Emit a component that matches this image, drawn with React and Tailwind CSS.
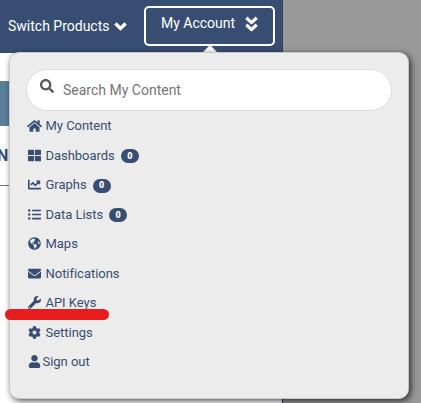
import { FaHome, FaThLarge, FaChartLine, FaListUl, FaGlobeAmericas, FaEnvelope, FaWrench, FaCog, FaUser, FaSearch } from "react-icons/fa";

const items = [
  { label: "My Content", icon: FaHome, wide: true },
  { label: "Dashboards", icon: FaThLarge, count: 0 },
  { label: "Graphs", icon: FaChartLine, count: 0 },
  { label: "Data Lists", icon: FaListUl, count: 0 },
  { label: "Maps", icon: FaGlobeAmericas },
  { label: "Notifications", icon: FaEnvelope },
  { label: "API Keys", icon: FaWrench, marked: true },
  { label: "Settings", icon: FaCog },
  { label: "Sign out", icon: FaUser, tight: true },
];

function iconClass(wide, tight) {
  if (wide) return "-ml-px mr-[3.5px] h-[14px] w-[15px] shrink-0";
  if (tight) return "-ml-[0.5px] mr-[2px] h-[13px] w-[13px] shrink-0";
  return "mr-[4.5px] size-[13px] shrink-0";
}

function MenuItem({ label, icon: Icon, count, marked, tight, wide }) {
  return (
    <li className="relative flex h-[29.5px] items-center">
      <Icon className={iconClass(wide, tight)} />
      <span className="tracking-[-0.03px]">{label}</span>
      {count !== undefined && (
        <span className="relative top-px ml-[6px] flex h-[14px] w-[18px] items-center justify-center rounded-full bg-[#374e72] text-[9px] font-black text-white">
          {count}
        </span>
      )}
      {marked && <span className="absolute top-[21px] -left-[23px] h-[11px] w-[104px] rounded-full bg-[#e81c1c]" />}
    </li>
  );
}

function Chevron({ className }) {
  return (
    <svg className={className} width="13" height="9" viewBox="0 0 13 9" fill="none" stroke="currentColor" strokeWidth="3.5">
      <path d="M1.4 1.5 6.5 6.4l5.1-4.9" />
    </svg>
  );
}

function DoubleChevron({ className }) {
  return (
    <svg className={className} width="13" height="16" viewBox="0 0 13 16" fill="none" stroke="currentColor" strokeWidth="3.2" strokeLinejoin="round">
      <path d="M1.3 1.8 6.5 6.6l5.2-4.8M1.3 8.8l5.2 4.8 5.2-4.8" />
    </svg>
  );
}

export default function App() {
  return (
    <div className="relative flex h-[403px] w-[421px] overflow-hidden bg-[#999] font-[Roboto,sans-serif] text-[#374e72]">
      <div className="w-[283px] border-r border-[#333e4f] bg-white">
        <header className="flex h-[53px] items-start bg-[#374e72] text-sm text-white">
          <div className="mt-[16px] ml-2 flex w-[136px] items-center leading-5">
            <span>Switch Products</span>
            <Chevron className="ml-[4px]" />
          </div>
          <button className="relative mt-[6px] flex h-10 w-[131px] shrink-0 items-start rounded-[5px] border-2 border-white pt-[5px] pl-[15px] leading-5">
            <span>My Account</span>
            <DoubleChevron className="mt-[3px] ml-[10px]" />
            <svg className="absolute top-[37px] left-[56px]" width="16" height="8" viewBox="0 0 16 8">
              <path d="M0 8 8 0l8 8z" fill="white" />
            </svg>
          </button>
        </header>
        <div className="mt-7 h-[45px] bg-[#5a7f9b]" />
        <div className="flex h-[60px] items-center border-b border-[#5a7290] text-base font-bold">
          <span className="-ml-[3px]">N</span>
        </div>
      </div>

      <nav className="absolute top-[52px] left-[9px] h-[347px] w-[400px] rounded-[10px] border border-[#c8c8c8] bg-[#ececec] pt-4 pl-4 shadow-[2px_2px_6px_rgba(0,0,0,0.7)]">
        <div className="flex h-[42px] w-[366px] items-center rounded-full border border-[#dcdcdc] bg-white pl-[13px]">
          <FaSearch className="-mt-[9px] mr-[9px] size-[14px] text-[#555]" />
          <input
            className="w-72 text-sm outline-none placeholder:text-[#757575]"
            placeholder="Search My Content"
          />
        </div>
        <ul className="pl-[2px] text-[13px]">
          {items.map((item) => <MenuItem key={item.label} {...item} />)}
        </ul>
      </nav>
    </div>
  );
}
